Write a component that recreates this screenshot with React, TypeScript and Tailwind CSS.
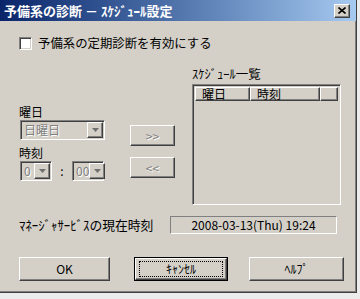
import React from 'react';

const font = "font-['Noto_Sans_CJK_JP','Noto_Sans',sans-serif]";
const raised =
  'border border-t-white border-l-white border-r-[#404040] border-b-[#404040] shadow-[inset_-1px_-1px_0_#808080]';
const sunken =
  'border border-t-[#808080] border-l-[#808080] border-r-white border-b-white shadow-[inset_1px_1px_0_#404040,inset_-1px_-1px_0_#d4d0c8]';
const disabledText = 'text-[#808080] [text-shadow:1px_1px_0_#ffffff]';

const Arrow: React.FC = () => (
  <div className={`ml-auto flex h-[16px] w-[16px] shrink-0 items-center justify-center bg-[#d4d0c8] ${raised}`}>
    <svg width="7" height="4" viewBox="0 0 7 4">
      <path d="M0 0h7L3.5 4z" fill="#707070" />
    </svg>
  </div>
);

const Combo: React.FC<{ text: string; className: string }> = ({ text, className }) => (
  <div className={`flex h-[20px] items-center bg-[#d4d0c8] p-[1px] ${sunken} ${className}`}>
    <span className={`pl-[2px] text-[12px] leading-none ${disabledText}`}>{text}</span>
    <Arrow />
  </div>
);

const Button: React.FC<{ label: string; className: string; disabled?: boolean }> = ({ label, className, disabled }) => (
  <div
    className={`flex items-center justify-center bg-[#d4d0c8] text-[12px] ${raised} ${
      disabled ? disabledText : 'text-black'
    } ${className}`}
  >
    {label}
  </div>
);

const App: React.FC = () => {
  return (
    <div className={`h-[299px] w-[360px] bg-[#ececec] ${font}`}>
      <div className="flex h-[293px] w-[357px] flex-col border-r border-b border-r-[#404040] border-b-[#404040] bg-[#d4d0c8] shadow-[inset_-1px_-1px_0_#808080]">
        {/* title bar */}
        <div className="flex h-[21px] shrink-0 items-center justify-between bg-gradient-to-r from-[#0a246a] to-[#a6caf0] pl-[4px] pr-[6px]">
          <span className="text-[13px] font-bold leading-none text-white">予備系の診断 － ｽｹｼﾞｭｰﾙ設定</span>
          <div className={`flex h-[14px] w-[16px] items-center justify-center bg-[#d4d0c8] ${raised}`}>
            <svg width="8" height="7" viewBox="0 0 8 7">
              <path d="M0.5 0.5L7.5 6.5M7.5 0.5L0.5 6.5" stroke="#000" strokeWidth="1.6" />
            </svg>
          </div>
        </div>

        <div className="flex flex-col pl-[19px]">
          {/* checkbox */}
          <div className="mt-[16px] flex h-[13px] items-center">
            <div className={`h-[13px] w-[13px] bg-white ${sunken}`} />
            <span className="ml-[6px] text-[12.4px] leading-none text-black">予備系の定期診断を有効にする</span>
          </div>

          {/* middle */}
          <div className="mt-[16px] flex h-[139px]">
            <div className="flex w-[111px] flex-col">
              <span className="mt-[39px] h-[14px] text-[12px] leading-[14px] text-black">曜日</span>
              <Combo text="日曜日" className="ml-[1px] mt-[1px] w-[85px]" />
              <span className="mt-[6px] h-[14px] text-[12px] leading-[14px] text-black">時刻</span>
              <div className="ml-[1px] mt-[1px] flex items-center">
                <Combo text="0" className="w-[32px]" />
                <span className="w-[20px] text-center text-[12px] leading-none text-black">:</span>
                <Combo text="00" className="w-[32px]" />
              </div>
            </div>
            <div className="flex w-[45px] flex-col">
              <Button label=">>" className="mt-[59px] h-[21px] w-[45px]" disabled />
              <Button label="<<" className="mt-[11px] h-[21px] w-[45px]" disabled />
            </div>
            <div className="ml-[17px] flex flex-col">
              <span className="mt-[1px] h-[14px] text-[12.5px] leading-[14px] text-black">ｽｹｼﾞｭｰﾙ一覧</span>
              <div className={`mt-[3px] h-[121px] w-[149px] p-[2px] bg-[#d4d0c8] ${sunken}`}>
                <div className="flex h-[14px] text-[12px] leading-none text-black">
                  <div className={`flex w-[55px] items-center pl-[6px] ${raised}`}>曜日</div>
                  <div className={`flex w-[70px] items-center pl-[6px] ${raised}`}>時刻</div>
                  <div className={`flex-1 ${raised}`} />
                </div>
              </div>
            </div>
          </div>

          {/* current time */}
          <div className="mt-[11px] flex h-[18px] items-center">
            <span className="w-[151px] text-[12.8px] leading-none text-black">ﾏﾈｰｼﾞｬｻｰﾋﾞｽの現在時刻</span>
            <div className="flex h-[18px] w-[167px] items-center justify-center border border-t-[#808080] border-l-[#808080] border-r-white border-b-white text-[12px] leading-none text-black">
              2008-03-13(Thu) 19:24
            </div>
          </div>

          {/* buttons */}
          <div className="mt-[23px] flex h-[24px] items-center">
            <Button label="OK" className="h-[24px] w-[91px]" />
            <div className="ml-[24px] h-[24px] w-[94px] border border-black">
              <div className={`flex h-full w-full items-center justify-center bg-[#d4d0c8] text-[12px] text-black ${raised}`}>
                <div className="flex h-[16px] w-[84px] items-center justify-center border border-dotted border-black leading-none">
                  ｷｬﾝｾﾙ
                </div>
              </div>
            </div>
            <Button label="ﾍﾙﾌﾟ" className="ml-[21px] h-[24px] w-[95px]" />
          </div>
        </div>
      </div>
    </div>
  );
};

export default App;
